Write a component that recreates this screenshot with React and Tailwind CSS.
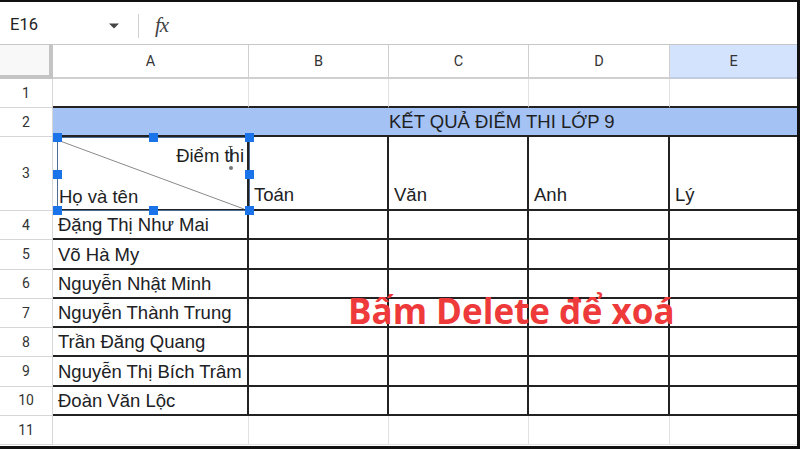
import React from "react";

const names = [
  "Đặng Thị Như Mai",
  "Võ Hà My",
  "Nguyễn Nhật Minh",
  "Nguyễn Thành Trung",
  "Trần Đăng Quang",
  "Nguyễn Thị Bích Trâm",
  "Đoàn Văn Lộc",
];

function RowHead({ n, h = "h-[29px]" }) {
  return (
    <div
      className={`${h} w-[53px] shrink-0 flex items-center justify-center border-r border-b border-[#d6d6d6] text-[14px] text-[#333] font-['Roboto',sans-serif]`}
    >
      {n}
    </div>
  );
}

function Handle({ cls }) {
  return <div className={`absolute w-[9px] h-[9px] bg-[#1a73e8] ${cls}`} />;
}

export default function App() {
  return (
    <div className="w-[800px] h-[449px] bg-[#111] pt-[2px] pr-[3px] pb-[3px] overflow-hidden">
      <div className="relative bg-white h-full flex flex-col font-['Liberation_Sans',Arial,sans-serif] text-[#202124]">
        {/* formula bar */}
        <div className="h-[43px] shrink-0 flex items-center pt-[5px] border-b border-[#c7c7c7]">
          <div className="w-[108px] pl-[10px] text-[16.5px] text-[#222] font-['Roboto',sans-serif]">E16</div>
          <svg width="12" height="8" viewBox="0 0 12 8" className="mt-[1px]">
            <path d="M1 1.5 L11 1.5 L6 6.5 Z" fill="#444" />
          </svg>
          <div className="ml-[18px] w-[1px] h-[24px] bg-[#d0d0d0]" />
          <div className="ml-[16px] text-[21px] italic text-[#444] font-['Liberation_Serif',serif] tracking-[-1px]">fx</div>
        </div>

        {/* column header row */}
        <div className="h-[34px] shrink-0 flex text-[14.5px] text-[#333] font-['Roboto',sans-serif]">
          <div className="w-[53px] shrink-0 bg-[#f8f8f8] border-r-[4px] border-b-[4px] border-[#c4c4c4]" />
          <div className="w-[196px] shrink-0 flex items-center justify-center pt-[1px] border-r border-b-2 border-[#d0d0d0]">A</div>
          <div className="w-[140px] shrink-0 flex items-center justify-center pt-[1px] border-r border-b-2 border-[#d0d0d0]">B</div>
          <div className="w-[140px] shrink-0 flex items-center justify-center pt-[1px] border-r border-b-2 border-[#d0d0d0]">C</div>
          <div className="w-[141px] shrink-0 flex items-center justify-center pt-[1px] border-r border-b-2 border-[#d0d0d0]">D</div>
          <div className="w-[127px] shrink-0 flex items-center justify-center pt-[1px] bg-[#d3e3fd] border-b-2 border-[#c0cde0]">E</div>
        </div>

        {/* row 1 */}
        <div className="h-[29px] shrink-0 flex">
          <RowHead n={1} h="h-[29px]" />
          <div className="w-[196px] shrink-0 border-r border-[#e2e2e2] border-b-2 border-b-[#222]" />
          <div className="w-[140px] shrink-0 border-r border-[#e2e2e2] border-b-2 border-b-[#222]" />
          <div className="w-[140px] shrink-0 border-r border-[#e2e2e2] border-b-2 border-b-[#222]" />
          <div className="w-[141px] shrink-0 border-r border-[#e2e2e2] border-b-2 border-b-[#222]" />
          <div className="w-[127px] shrink-0 border-b-2 border-b-[#222]" />
        </div>

        {/* row 2 */}
        <div className="h-[29px] shrink-0 flex">
          <RowHead n={2} />
          <div className="flex-1 bg-[#a4c2f4] border-b-2 border-[#222] flex items-center pl-[336px] text-[18.5px] text-[#1f1f1f]">
            KẾT QUẢ ĐIỂM THI LỚP 9
          </div>
        </div>

        {/* row 3 */}
        <div className="h-[74px] shrink-0 flex text-[18.5px]">
          <RowHead n={3} h="h-[74px]" />
          <div className="relative w-[196px] shrink-0 border-r-2 border-b-2 border-[#222]">
            <div className="absolute left-[4px] top-0 w-[193px] h-[74px] border border-[#4f6c94]">
              <svg className="absolute inset-0" width="191" height="72" viewBox="0 0 191 72">
                <line x1="2" y1="3" x2="186" y2="71" stroke="#8a8a8a" strokeWidth="1" />
              </svg>
              <div className="absolute right-[5px] top-[4px] text-[18.5px] text-[#1f1f1f]">Điểm thi</div>
              <div className="absolute left-[1px] bottom-[-1px] text-[18.5px] text-[#1f1f1f]">Họ và tên</div>
              <div className="absolute left-[171px] top-[28px] w-[4px] h-[4px] rounded-full bg-[#777]" />
              <svg className="absolute left-[170px] top-[8px]" width="5" height="15" viewBox="0 0 5 15">
                <path d="M0.5 0.5 H4.5 M2.5 0.5 V14.5 M0.5 14.5 H4.5" stroke="#333" strokeWidth="0.8" fill="none" />
              </svg>
              <Handle cls="-left-[5px] -top-[5px]" />
              <Handle cls="left-[91px] -top-[5px]" />
              <Handle cls="-right-[5px] -top-[5px]" />
              <Handle cls="-left-[5px] top-[32px]" />
              <Handle cls="-right-[5px] top-[32px]" />
              <Handle cls="-left-[5px] -bottom-[5px]" />
              <Handle cls="left-[91px] -bottom-[5px]" />
              <Handle cls="-right-[5px] -bottom-[5px]" />
            </div>
          </div>
          <div className="w-[140px] shrink-0 border-r-2 border-b-2 border-[#222] flex items-end pl-[5px]">Toán</div>
          <div className="w-[140px] shrink-0 border-r-2 border-b-2 border-[#222] flex items-end pl-[5px]">Văn</div>
          <div className="w-[141px] shrink-0 border-r-2 border-b-2 border-[#222] flex items-end pl-[5px]">Anh</div>
          <div className="w-[127px] shrink-0 border-b-2 border-[#222] flex items-end pl-[5px]">Lý</div>
        </div>

        {/* rows 4-10 */}
        {names.map((name, i) => (
          <div key={i} className="h-[29.3px] shrink-0 flex text-[18.5px]">
            <RowHead n={i + 4} h="h-[29.3px]" />
            <div className="w-[196px] shrink-0 border-r-2 border-b-2 border-[#222] flex items-center pl-[5px] pt-[1px]">
              {name}
            </div>
            <div className="w-[140px] shrink-0 border-r-2 border-b-2 border-[#222]" />
            <div className="w-[140px] shrink-0 border-r-2 border-b-2 border-[#222]" />
            <div className="w-[141px] shrink-0 border-r-2 border-b-2 border-[#222]" />
            <div className="w-[127px] shrink-0 border-b-2 border-[#222]" />
          </div>
        ))}

        {/* row 11 */}
        <div className="h-[29px] shrink-0 flex">
          <RowHead n={11} />
          <div className="w-[196px] shrink-0 border-r border-b border-[#e2e2e2]" />
          <div className="w-[140px] shrink-0 border-r border-b border-[#e2e2e2]" />
          <div className="w-[140px] shrink-0 border-r border-b border-[#e2e2e2]" />
          <div className="w-[141px] shrink-0 border-r border-b border-[#e2e2e2]" />
          <div className="w-[127px] shrink-0 border-b border-[#e2e2e2]" />
        </div>

        {/* overlay caption */}
        <div className="absolute left-[348px] top-[291px] text-[35px] font-bold text-[#ee3a3a] font-['Open_Sans',sans-serif] leading-none">
          Bấm Delete để xoá
        </div>
      </div>
    </div>
  );
}
